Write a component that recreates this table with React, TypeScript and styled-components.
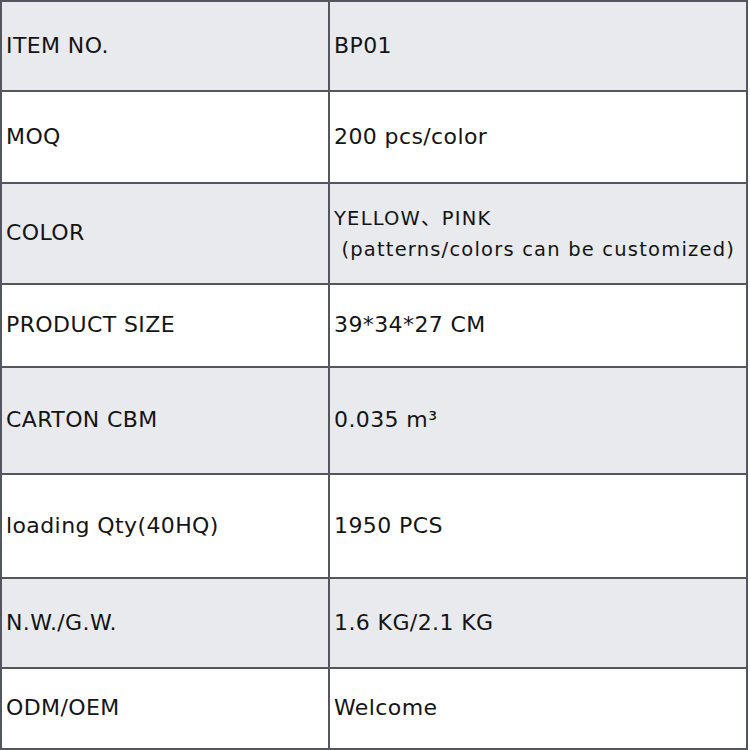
import styled, { createGlobalStyle } from "styled-components";

const GlobalStyle = createGlobalStyle`
  html, body {
    margin: 0;
    padding: 0;
    background: #ffffff;
  }
`;

const Table = styled.table`
  width: 748px;
  border-collapse: collapse;
  font-family: "DejaVu Sans", "Noto Sans CJK SC", sans-serif;
  color: #141414;
  table-layout: fixed;
`;

const Row = styled.tr<{ $shaded: boolean; $h: number }>`
  height: ${(p) => p.$h}px;
  background: ${(p) => (p.$shaded ? "#e9eaee" : "#ffffff")};
`;

const Cell = styled.td<{ $small?: boolean }>`
  border: 2px solid #53565e;
  padding: 0 4px;
  font-size: ${(p) => (p.$small ? "19.5px" : "22px")};
  letter-spacing: ${(p) => (p.$small ? "1.2px" : "0.4px")};
  line-height: ${(p) => (p.$small ? "31px" : "1.3")};
  vertical-align: middle;
  white-space: pre-wrap;
  &:first-child {
    width: 318px;
  }
`;

interface SpecRow {
  label: string;
  value: string;
  height: number;
  small?: boolean;
}

const rows: SpecRow[] = [
  { label: "ITEM NO.", value: "BP01", height: 90 },
  { label: "MOQ", value: "200 pcs/color", height: 92 },
  {
    label: "COLOR",
    value: "YELLOW、PINK\n (patterns/colors can be customized)",
    height: 101,
    small: true,
  },
  { label: "PRODUCT SIZE", value: "39*34*27 CM", height: 83 },
  { label: "CARTON CBM", value: "0.035 m³", height: 107 },
  { label: "loading Qty(40HQ)", value: "1950 PCS", height: 104 },
  { label: "N.W./G.W.", value: "1.6 KG/2.1 KG", height: 90 },
  { label: "ODM/OEM", value: "Welcome", height: 81 },
];

const App = () => {
  return (
    <>
      <GlobalStyle />
      <Table>
        <tbody>
          {rows.map((r, i) => (
            <Row key={r.label} $shaded={i % 2 === 0} $h={r.height}>
              <Cell>{r.label}</Cell>
              <Cell $small={r.small}>{r.value}</Cell>
            </Row>
          ))}
        </tbody>
      </Table>
    </>
  );
};

export default App;
